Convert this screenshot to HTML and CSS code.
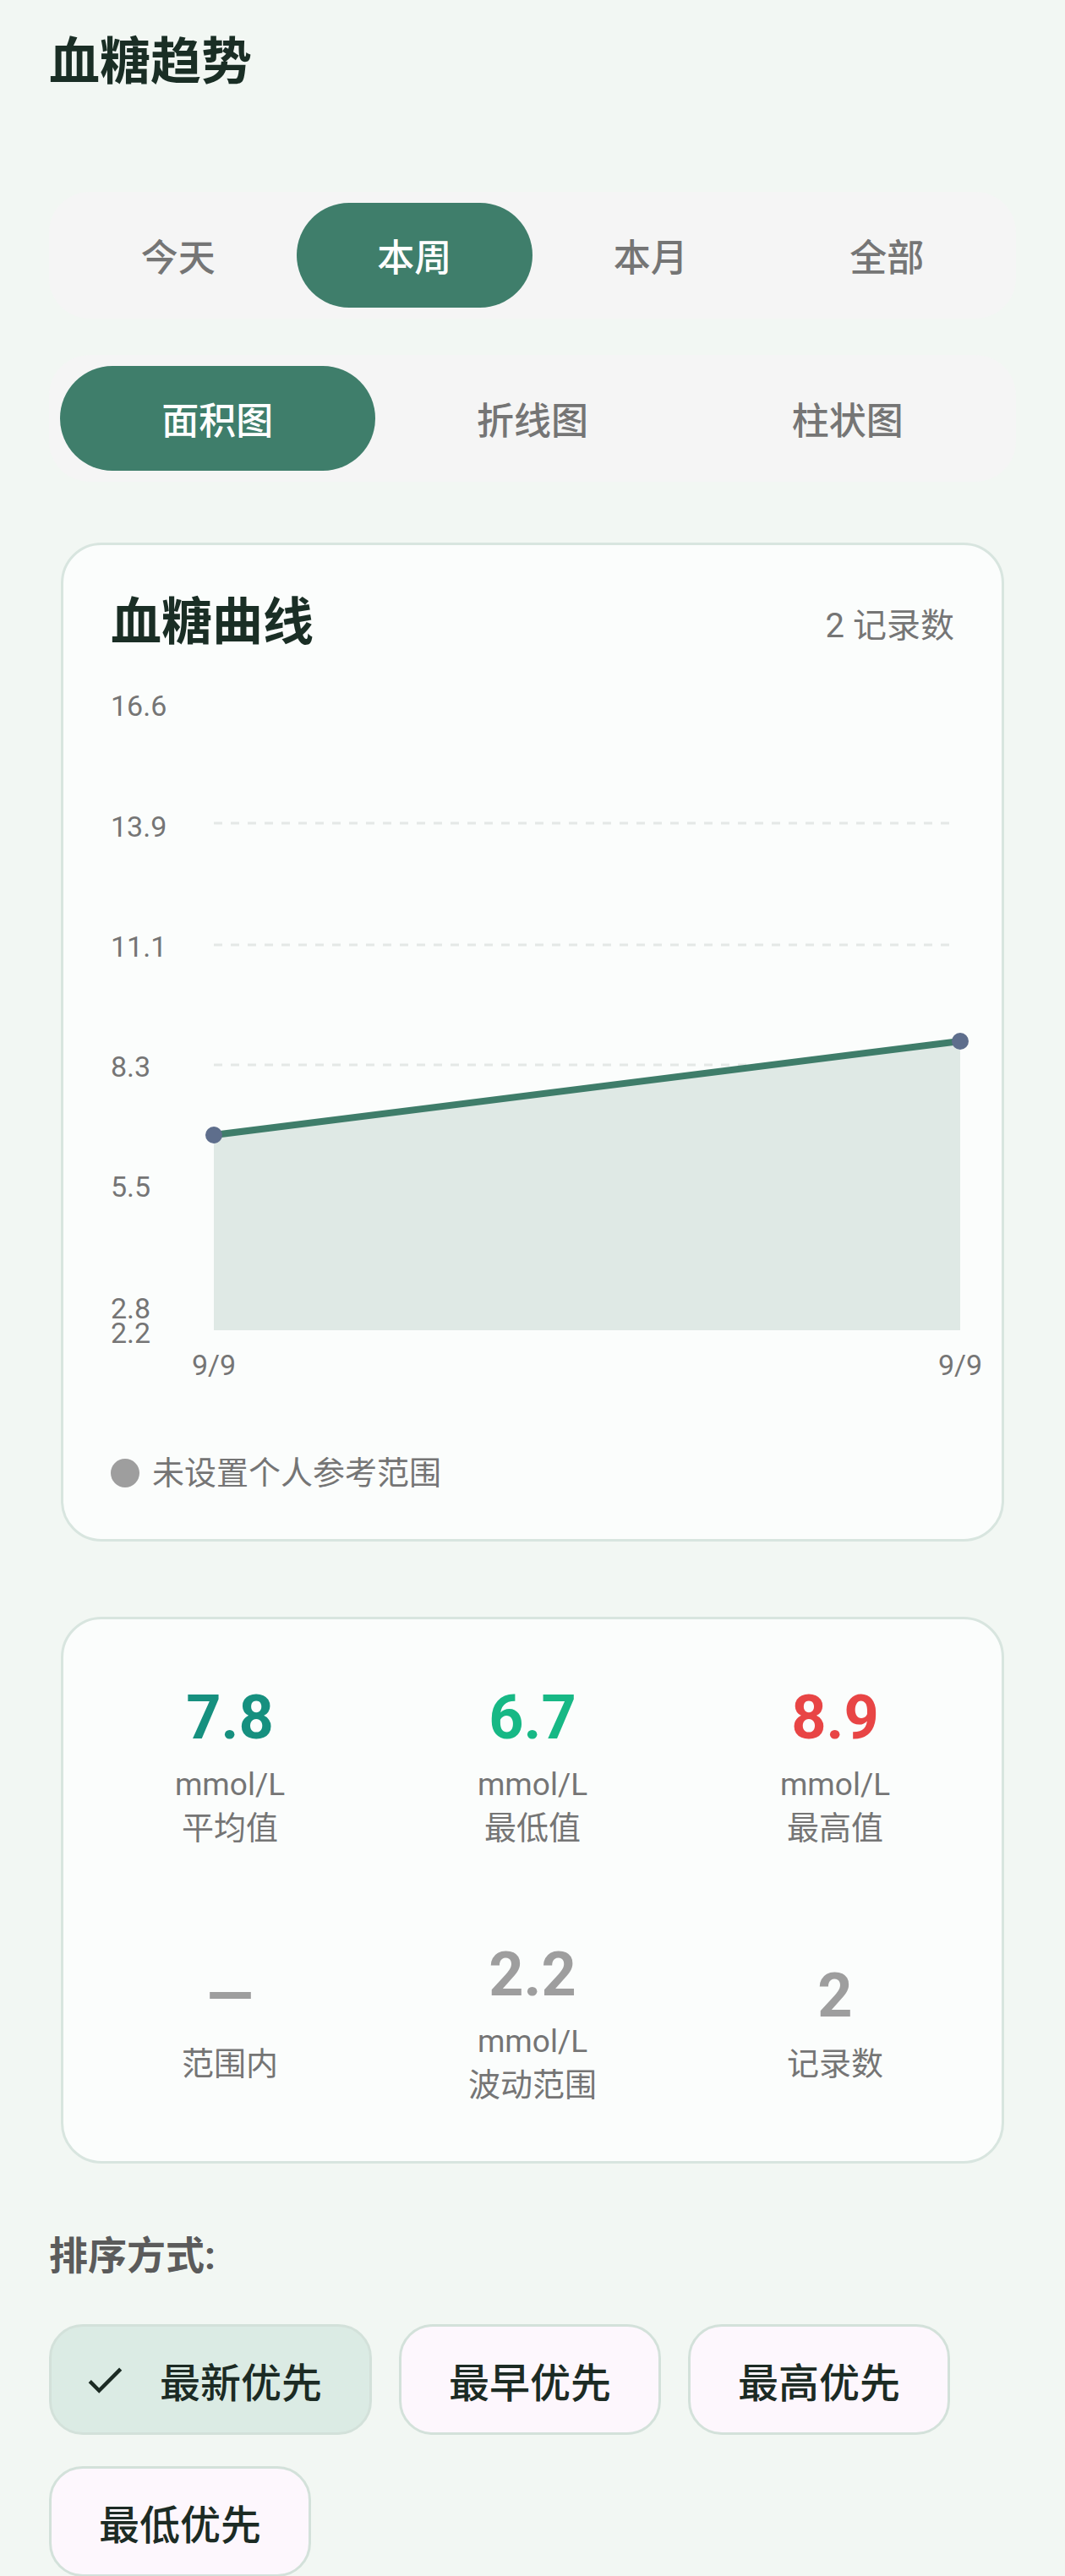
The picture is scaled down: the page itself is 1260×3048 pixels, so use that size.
FILE: index.html
```html
<!DOCTYPE html>
<html lang="zh-CN">
<head>
    <meta charset="UTF-8">
    <meta name="viewport" content="width=device-width, initial-scale=1.0">
    <title>血糖趋势</title>
    <link rel="stylesheet" href="styles.css">
</head>
<body>
    <div class="page">
        <h1 class="page-title">血糖趋势</h1>

        <div class="segmented cols-4">
            <div class="seg">今天</div>
            <div class="seg active">本周</div>
            <div class="seg">本月</div>
            <div class="seg">全部</div>
        </div>

        <div class="segmented cols-3">
            <div class="seg active">面积图</div>
            <div class="seg">折线图</div>
            <div class="seg">柱状图</div>
        </div>

        <div class="card chart-card">
            <div class="card-header">
                <h2 class="card-title">血糖曲线</h2>
                <span class="count">2 记录数</span>
            </div>

            <svg class="chart" width="1010" height="850" viewBox="0 0 1010 850">
                <!-- 网格线 -->
                <g class="grid">
                    <line x1="122" y1="174" x2="994" y2="174"/>
                    <line x1="122" y1="318" x2="994" y2="318"/>
                    <line x1="122" y1="460" x2="994" y2="460"/>
                    <line x1="122" y1="603" x2="994" y2="603"/>
                    <line x1="122" y1="745" x2="994" y2="745"/>
                </g>
                <g class="axis-y">
                    <text x="0" y="47">16.6</text>
                    <text x="0" y="190">13.9</text>
                    <text x="0" y="332">11.1</text>
                    <text x="0" y="474">8.3</text>
                    <text x="0" y="616">5.5</text>
                    <text x="0" y="760">2.8</text>
                    <text x="0" y="789">2.2</text>
                </g>
                <polygon class="area" points="122,543 1005,432 1005,774 122,774"/>
                <line class="trend" x1="122" y1="543" x2="1005" y2="432"/>
                <circle class="point" cx="122" cy="543" r="10"/>
                <circle class="point" cx="1005" cy="432" r="10"/>
                <g class="axis-x">
                    <text x="122" y="827">9/9</text>
                    <text x="1005" y="827">9/9</text>
                </g>
            </svg>

            <div class="legend"><span class="dot"></span>未设置个人参考范围</div>
        </div>

        <div class="card stats-card">
            <div class="stats-grid">
                <div class="stat">
                    <div class="stat-value teal">7.8</div>
                    <div class="stat-unit">mmol/L</div>
                    <div class="stat-label">平均值</div>
                </div>
                <div class="stat">
                    <div class="stat-value green">6.7</div>
                    <div class="stat-unit">mmol/L</div>
                    <div class="stat-label">最低值</div>
                </div>
                <div class="stat">
                    <div class="stat-value red">8.9</div>
                    <div class="stat-unit">mmol/L</div>
                    <div class="stat-label">最高值</div>
                </div>
                <div class="stat">
                    <div class="stat-value muted">—</div>
                    <div class="stat-label">范围内</div>
                </div>
                <div class="stat">
                    <div class="stat-value muted">2.2</div>
                    <div class="stat-unit">mmol/L</div>
                    <div class="stat-label">波动范围</div>
                </div>
                <div class="stat">
                    <div class="stat-value muted">2</div>
                    <div class="stat-label">记录数</div>
                </div>
            </div>
        </div>

        <div class="sort-label">排序方式:</div>
        <div class="chips">
            <div class="chip selected">
                <svg class="check" viewBox="0 0 24 24"><path d="M9 16.17L4.83 12l-1.42 1.41L9 19 21 7l-1.41-1.41z"/></svg>
                最新优先
            </div>
            <div class="chip">最早优先</div>
            <div class="chip">最高优先</div>
            <div class="chip">最低优先</div>
        </div>
    </div>
</body>
</html>
```

FILE: styles.css
```css
* {
    box-sizing: border-box;
    margin: 0;
    padding: 0;
}

body {
    font-family: Roboto, "Noto Sans CJK SC", sans-serif;
    background-color: #f2f7f3;
    color: #1b2e25;
}

.page {
    padding: 35px 58px 40px;
}

.page-title {
    font-size: 60px;
    line-height: 78px;
    font-weight: 700;
    color: #1a2e25;
}

/* 分段选择 */
.segmented {
    display: grid;
    padding: 13px;
    background-color: #f5f5f5;
    border-radius: 48px;
}

.segmented.cols-4 {
    grid-template-columns: repeat(4, 1fr);
    margin-top: 114px;
}

.segmented.cols-3 {
    grid-template-columns: repeat(3, 1fr);
    margin-top: 43px;
}

.seg {
    height: 124px;
    display: flex;
    align-items: center;
    justify-content: center;
    border-radius: 62px;
    font-size: 44px;
    font-weight: 500;
    color: #757575;
}

.seg.active {
    background-color: #3f7e6b;
    color: #ffffff;
}

/* 卡片 */
.card {
    margin: 0 14px;
    background-color: #fbfdfc;
    border: 3px solid #d8e5df;
    border-radius: 48px;
}

.chart-card {
    margin-top: 72px;
    padding: 53px 56px 52px;
}

.card-header {
    display: flex;
    justify-content: space-between;
    align-items: center;
    height: 78px;
}

.card-title {
    font-size: 60px;
    line-height: 78px;
    font-weight: 700;
    color: #1a2e25;
}

.count {
    font-size: 40px;
    color: #757575;
}

.chart {
    display: block;
    margin-top: 24px;
    overflow: visible;
}

.chart text {
    font-family: Roboto, sans-serif;
    font-size: 34px;
    fill: #757575;
}

.chart .axis-x text {
    text-anchor: middle;
}

.grid line {
    stroke: #e4e8e6;
    stroke-width: 3;
    stroke-dasharray: 10 10;
}

.area {
    fill: #dfe9e5;
}

.trend {
    stroke: #3f7d6a;
    stroke-width: 8;
    stroke-linecap: round;
}

.point {
    fill: #5e6e8c;
}

.legend {
    display: flex;
    align-items: center;
    margin-top: 67px;
    font-size: 38px;
    line-height: 52px;
    color: #757575;
}

.legend .dot {
    width: 34px;
    height: 34px;
    border-radius: 50%;
    background-color: #9e9e9e;
    margin-right: 15px;
}

/* 统计 */
.stats-card {
    margin-top: 89px;
    padding: 75px 18px 64px;
}

.stats-grid {
    display: grid;
    grid-template-columns: repeat(3, 1fr);
    row-gap: 106px;
    align-items: center;
}

.stat {
    display: flex;
    flex-direction: column;
    align-items: center;
    text-align: center;
}

.stat-value {
    font-size: 72px;
    line-height: 84px;
    font-weight: 700;
    margin-bottom: 12px;
}

.stat-value.teal { color: #16907f; }
.stat-value.green { color: #17b885; }
.stat-value.red { color: #e84545; }
.stat-value.muted { color: #9e9e9e; }

.stat-unit {
    font-size: 37px;
    line-height: 50px;
    color: #757575;
}

.stat-label {
    font-size: 38px;
    line-height: 52px;
    color: #757575;
}

/* 排序 */
.sort-label {
    margin-top: 77px;
    font-size: 46px;
    line-height: 64px;
    font-weight: 700;
    color: #5b5b5b;
}

.chips {
    display: flex;
    flex-wrap: wrap;
    gap: 37px 32px;
    margin-top: 49px;
}

.chip {
    display: inline-flex;
    align-items: center;
    height: 131px;
    padding: 0 56px;
    border: 3px solid #d3e1da;
    border-radius: 40px;
    background-color: #fdf7fd;
    font-size: 48px;
    font-weight: 500;
    color: #1c2b24;
}

.chip.selected {
    padding-left: 36px;
    background-color: #dbebe4;
}

.check {
    width: 54px;
    height: 54px;
    margin-right: 38px;
    fill: #1c2b24;
}
```
